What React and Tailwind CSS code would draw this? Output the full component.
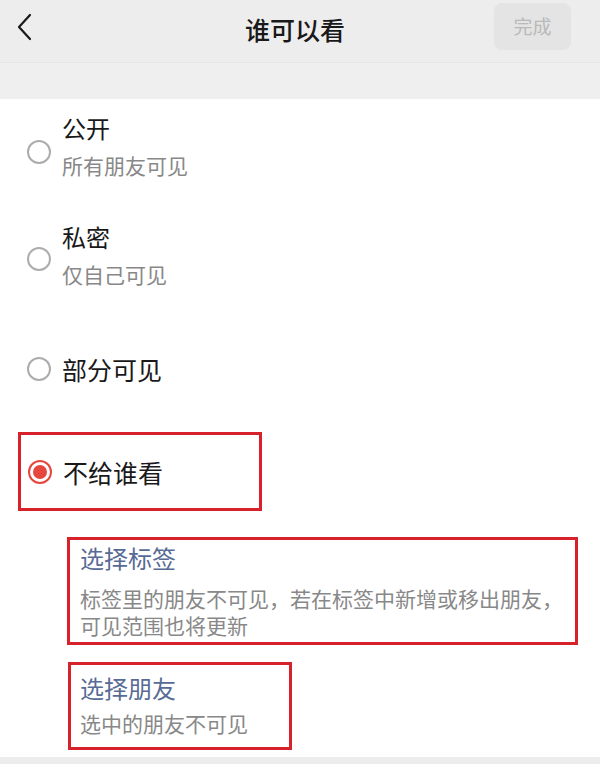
const font = { fontFamily: '"Noto Sans CJK SC", "Noto Sans", sans-serif' };

const Radio = ({ checked, className = "" }) => (
  <div
    className={`w-[24px] h-[24px] shrink-0 rounded-full border-2 flex items-center justify-center ${
      checked ? "border-[#e5473e]" : "border-[#acacac]"
    } ${className}`}
  >
    {checked && <div className="w-[14px] h-[14px] rounded-full bg-[#e5473e]" />}
  </div>
);

const App = () => {
  return (
    <div className="w-[600px] h-[764px] overflow-hidden bg-white" style={font}>
      {/* header */}
      <div className="h-[62px] bg-[#ededed] flex items-start">
        <div className="w-[120px] pl-[16px] pt-[13px]">
          <svg width="18" height="28" viewBox="0 0 18 28" fill="none">
            <path d="M14 2 L3 14 L14 26" stroke="#1a1a1a" strokeWidth="2.2" strokeLinecap="round" strokeLinejoin="round" />
          </svg>
        </div>
        <div className="flex-1 pt-[12px] text-center text-[25px] font-medium text-[#191919] leading-[34px]">谁可以看</div>
        <div className="w-[130px] flex justify-end pr-[29px] pt-[3px]">
          <div className="w-[77px] h-[47px] rounded-lg bg-[#e4e4e4] flex items-center justify-center text-[19px] text-[#b9b9b9]">
            完成
          </div>
        </div>
      </div>
      <div className="h-[37px] bg-[#efefef] border-t border-[#e6e6e6]" />

      {/* options */}
      <div className="h-[658px] bg-white">
        <div className="h-[109px] pt-[13px] pl-[27px] flex items-start gap-[11px]">
          <Radio className="mt-[28px]" />
          <div>
            <div className="text-[24px] leading-[32px] text-[#191919]">公开</div>
            <div className="mt-[7px] text-[21px] leading-[28px] text-[#888888]">所有朋友可见</div>
          </div>
        </div>
        <div className="h-[109px] pt-[13px] pl-[27px] flex items-start gap-[11px]">
          <Radio className="mt-[26px]" />
          <div>
            <div className="text-[24px] leading-[32px] text-[#191919]">私密</div>
            <div className="mt-[7px] text-[21px] leading-[28px] text-[#888888]">仅自己可见</div>
          </div>
        </div>
        <div className="h-[104px] pl-[27px] flex items-center gap-[11px]">
          <Radio />
          <div className="text-[25px] leading-[32px] text-[#191919]">部分可见</div>
        </div>

        <div className="mt-[11px] ml-[18px] w-[244px] h-[79px] border-[3px] border-[#d7212b] pl-[7px] flex items-center gap-[11px]">
          <Radio checked />
          <div className="text-[25px] leading-[32px] text-[#191919]">不给谁看</div>
        </div>

        <div className="mt-[26px] ml-[67px] w-[511px] h-[108px] border-[3px] border-[#d7212b] pl-[10px] pt-[2px]">
          <div className="text-[24px] leading-[32px] text-[#576b95]">选择标签</div>
          <div className="mt-[11px] text-[21px] leading-[27px] text-[#888888]">
            标签里的朋友不可见，若在标签中新增或移出朋友，
            <br />
            可见范围也将更新
          </div>
        </div>

        <div className="mt-[17px] ml-[68px] w-[224px] h-[88px] border-[3px] border-[#d7212b] pl-[9px] pt-[7px]">
          <div className="text-[24px] leading-[32px] text-[#576b95]">选择朋友</div>
          <div className="mt-[5px] text-[21px] leading-[28px] text-[#888888]">选中的朋友不可见</div>
        </div>
      </div>
      <div className="h-[7px] bg-[#ededed]" />
    </div>
  );
};

export default App;
